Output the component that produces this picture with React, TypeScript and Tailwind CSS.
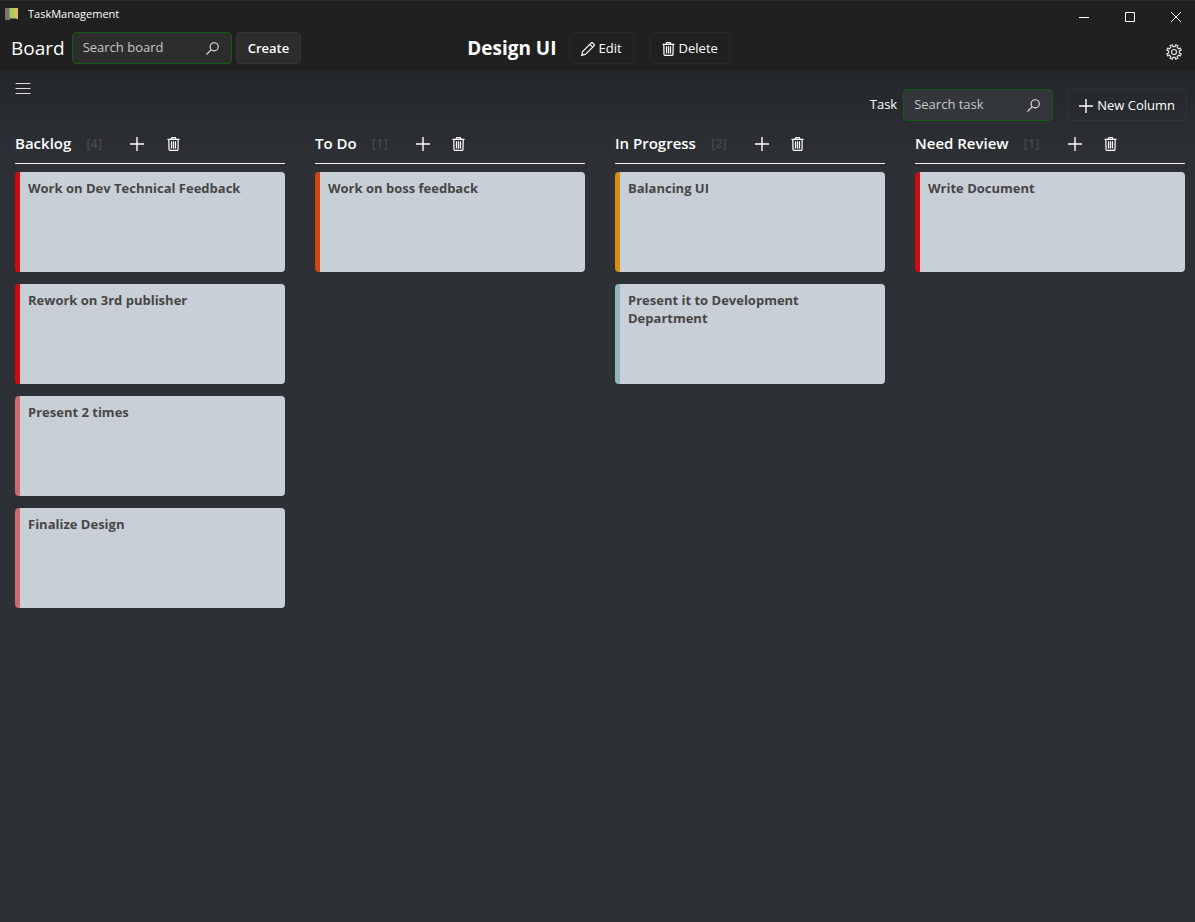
import type { ReactNode } from "react";

interface Task {
  title: string;
  accent: string;
}

interface BoardColumn {
  name: string;
  tasks: Task[];
}

const columns: BoardColumn[] = [
  {
    name: "Backlog",
    tasks: [
      { title: "Work on Dev Technical Feedback", accent: "border-[#cf0a0e]" },
      { title: "Rework on 3rd publisher", accent: "border-[#cf0a0e]" },
      { title: "Present 2 times", accent: "border-[#cb6b70]" },
      { title: "Finalize Design", accent: "border-[#cb6b70]" },
    ],
  },
  {
    name: "To Do",
    tasks: [{ title: "Work on boss feedback", accent: "border-[#d44312]" }],
  },
  {
    name: "In Progress",
    tasks: [
      { title: "Balancing UI", accent: "border-[#d69010]" },
      { title: "Present it to Development Department", accent: "border-[#94b5c0]" },
    ],
  },
  {
    name: "Need Review",
    tasks: [{ title: "Write Document", accent: "border-[#cf0a0e]" }],
  },
];

const PlusIcon = () => (
  <svg width="14" height="14" viewBox="0 0 14 14" fill="none" stroke="currentColor" strokeWidth="1.4" aria-hidden="true">
    <path d="M7 0v14M0 7h14" />
  </svg>
);

const TrashIcon = () => (
  <svg width="13" height="14" viewBox="0 0 13 14" fill="none" stroke="currentColor" strokeWidth="1.2" aria-hidden="true">
    <path d="M0.5 2.3h12M4.3 2.2V1.4a.8.8 0 0 1 .8-.8h2.8a.8.8 0 0 1 .8.8v.8M1.8 2.3l.2 10.2a.9.9 0 0 0 .9.9h7.2a.9.9 0 0 0 .9-.9l.2-10.2M4.5 4.2v7.2M6.5 4.2v7.2M8.5 4.2v7.2" />
  </svg>
);

const PencilIcon = () => (
  <svg width="14" height="14" viewBox="0 0 14 14" fill="none" stroke="currentColor" strokeWidth="1.2" strokeLinejoin="round" aria-hidden="true">
    <path d="M.6 13.4l1.2-4.1 8-8a1.7 1.7 0 0 1 2.4 0l.5.5a1.7 1.7 0 0 1 0 2.4l-8 8zM8.8 2.3l2.9 2.9" />
  </svg>
);

const SearchIcon = () => (
  <svg width="13" height="13" viewBox="0 0 13 13" fill="none" stroke="currentColor" strokeWidth="1.1" aria-hidden="true">
    <circle cx="8.2" cy="4.8" r="4.1" />
    <path d="M5.3 7.7L.5 12.5" />
  </svg>
);

const GearIcon = () => (
  <svg width="16" height="16" viewBox="0 0 16 16" fill="none" stroke="currentColor" strokeWidth="1.2" strokeLinejoin="round" aria-hidden="true">
    <path d="M6.3.8L6.9 2.6h2.2L9.7.8l2.2.9-.8 1.7 1.5 1.5 1.7-.8.9 2.2-1.8.6v2.2l1.8.6-.9 2.2-1.7-.8-1.5 1.5.8 1.7-2.2.9-.6-1.8H6.9l-.6 1.8-2.2-.9.8-1.7-1.5-1.5-1.7.8-.9-2.2 1.8-.6V6.9L.8 6.3l.9-2.2 1.7.8 1.5-1.5-.8-1.7z" />
    <circle cx="8" cy="8" r="2.5" />
  </svg>
);

interface SearchBoxProps {
  id: string;
  placeholder: string;
  className: string;
}

const SearchBox = ({ id, placeholder, className }: SearchBoxProps) => (
  <div className={`flex h-8 items-center rounded border border-[#135c18] pr-3 pl-[10px] text-[#e4e4e4] ${className}`}>
    <input
      id={id}
      type="text"
      placeholder={placeholder}
      className="w-full min-w-0 bg-transparent text-[13px] outline-none placeholder:text-[#c8c8c8]"
    />
    <button type="button" aria-label={placeholder} className="shrink-0">
      <SearchIcon />
    </button>
  </div>
);

const OutlineButton = ({ children }: { children: ReactNode }) => (
  <button type="button" className="flex h-8 items-center gap-1 rounded border border-white/4 px-[11px] pt-px text-[13px] whitespace-nowrap">
    {children}
  </button>
);

const TitleBar = () => (
  <div className="flex h-7 items-center justify-between border-t border-[#2b2e31] pr-[14px] pl-[5px]">
    <div className="flex items-center gap-[9px] pb-px text-[11px]">
      <svg width="14" height="14" viewBox="0 0 14 14" aria-hidden="true">
        <path d="M0 1h5v12H0z" fill="#75756f" />
        <path d="M9 1h4v11.5l-2-1H9z" fill="#d9bd69" />
        <path d="M4.5 1H9v10.5H4.5z" fill="#a8cf55" />
      </svg>
      <span>TaskManagement</span>
    </div>
    <div className="flex items-center gap-9 pt-1">
      <button type="button" aria-label="Minimize">
        <svg width="10" height="10" viewBox="0 0 10 10" stroke="currentColor">
          <path d="M0 5.5h10" />
        </svg>
      </button>
      <button type="button" aria-label="Maximize">
        <svg width="10" height="10" viewBox="0 0 10 10" fill="none" stroke="currentColor">
          <path d="M.5.5h9v9h-9z" />
        </svg>
      </button>
      <button type="button" aria-label="Close">
        <svg width="10" height="10" viewBox="0 0 10 10" stroke="currentColor">
          <path d="M0 0l10 10M10 0L0 10" />
        </svg>
      </button>
    </div>
  </div>
);

const BoardHeader = () => (
  <div className="grid h-[42px] grid-cols-[1fr_auto_1fr] items-center pr-[13px] pb-[2px] pl-[11px]">
    <div className="flex items-center">
      <label htmlFor="board-search" className="mr-[7px] text-[19px] leading-6">
        Board
      </label>
      <SearchBox id="board-search" placeholder="Search board" className="w-40 bg-[#2d2d2d]" />
      <button type="button" className="ml-1 h-8 rounded border border-[#343434] bg-[#2d2d2d] px-[11px] pt-px text-[13px] font-semibold">
        Create
      </button>
    </div>
    <div className="flex items-center pl-1">
      <h1 className="mr-3 text-[19px] font-bold">Design UI</h1>
      <OutlineButton>
        <PencilIcon />
        Edit
      </OutlineButton>
      <div className="ml-4">
        <OutlineButton>
          <TrashIcon />
          Delete
        </OutlineButton>
      </div>
    </div>
    <button type="button" aria-label="Settings" className="justify-self-end pt-2 text-[#e4e4e4]">
      <GearIcon />
    </button>
  </div>
);

const TaskCard = ({ title, accent }: Task) => (
  <article className={`h-[100px] rounded border-l-[5px] bg-[#c9cfd7] px-2 pt-[7px] ${accent}`}>
    <h3 className="text-[13px] leading-[18px] font-bold text-[#464646]">{title}</h3>
  </article>
);

const Column = ({ name, tasks }: BoardColumn) => (
  <section className="min-w-0">
    <header className="flex h-10 items-center border-b border-[#f2f2f2]">
      <h2 className="text-[15px] font-semibold whitespace-nowrap">{name}</h2>
      <span className="mr-[17px] ml-[15px] text-[13px] font-semibold text-[#45494c]">[{tasks.length}]</span>
      <button type="button" aria-label={`Add task to ${name}`} className="flex h-8 w-9 items-center justify-center">
        <PlusIcon />
      </button>
      <button type="button" aria-label={`Delete ${name}`} className="flex h-8 w-9 items-center justify-center">
        <TrashIcon />
      </button>
    </header>
    <div className="mt-2 flex flex-col gap-3">
      {tasks.map((task) => (
        <TaskCard key={task.title} {...task} />
      ))}
    </div>
  </section>
);

export default function App() {
  return (
    <div className="flex min-h-screen flex-col bg-[#2d3135] font-['Open_Sans','Noto_Sans',sans-serif] text-white">
      <div className="bg-[#202020]">
        <TitleBar />
        <BoardHeader />
      </div>
      <main className="flex-1 bg-linear-to-b from-[#23262b] to-[#2d3135] to-[90px]">
        <div className="flex h-[54px] items-start justify-between pr-2 pl-[15px]">
          <button type="button" aria-label="Open menu" className="mt-[12px] text-[#dcdcdc]">
            <svg width="16" height="13" viewBox="0 0 16 13" stroke="currentColor" strokeWidth="1">
              <path d="M.5 1.5h15M.5 6.5h15M.5 11.5h15" />
            </svg>
          </button>
          <div className="mt-[19px] flex items-center">
            <label htmlFor="task-search" className="mr-[6px] text-[13px]">
              Task
            </label>
            <SearchBox id="task-search" placeholder="Search task" className="mr-[14px] w-[150px] bg-[#33363a]" />
            <OutlineButton>
              <PlusIcon />
              New Column
            </OutlineButton>
          </div>
        </div>
        <div className="grid grid-cols-4 gap-[30px] pr-[10px] pl-[15px]">
          {columns.map((column) => (
            <Column key={column.name} {...column} />
          ))}
        </div>
      </main>
    </div>
  );
}
